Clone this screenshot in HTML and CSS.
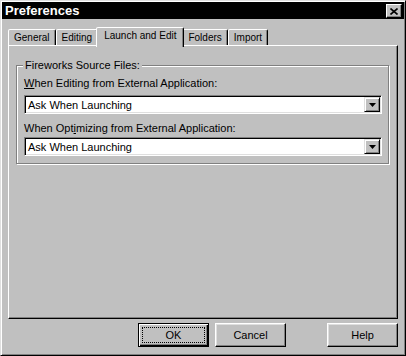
FILE: index.html
```html
<!DOCTYPE html>
<html lang="en">
<head>
    <meta charset="UTF-8">
    <title>Preferences</title>
    <link rel="stylesheet" href="styles.css">
</head>
<body>
    <div class="window">
        <div class="titlebar">
            <span class="title">Preferences</span>
            <button class="close-btn" aria-label="Close">
                <svg width="8" height="7" viewBox="0 0 8 7"><path d="M0.5 0.5L7.5 6.5M7.5 0.5L0.5 6.5" stroke="#000" stroke-width="1.6" fill="none"/></svg>
            </button>
        </div>
        <div class="content">
            <div class="tabs">
                <div class="tab">General</div>
                <div class="tab">Editing</div>
                <div class="tab active">Launch and Edit</div>
                <div class="tab">Folders</div>
                <div class="tab">Import</div>
            </div>
            <div class="panel">
                <fieldset class="group">
                    <legend>Fireworks Source Files:</legend>
                    <label class="field-label"><u>W</u>hen Editing from External Application:</label>
                    <div class="combo">
                        <span class="combo-text">Ask When Launching</span>
                        <span class="combo-btn"><svg width="7" height="4" viewBox="0 0 7 4"><path d="M0 0h7L3.5 4z" fill="#000"/></svg></span>
                    </div>
                    <label class="field-label second">When Opt<u>i</u>mizing from External Application:</label>
                    <div class="combo">
                        <span class="combo-text">Ask When Launching</span>
                        <span class="combo-btn"><svg width="7" height="4" viewBox="0 0 7 4"><path d="M0 0h7L3.5 4z" fill="#000"/></svg></span>
                    </div>
                </fieldset>
            </div>
            <div class="footer">
                <button class="btn default"><span class="focus">OK</span></button>
                <button class="btn">Cancel</button>
                <button class="btn help">Help</button>
            </div>
        </div>
    </div>
</body>
</html>
```

FILE: styles.css
```css
* {
    box-sizing: border-box;
}
body {
    margin: 0;
    font-family: "Liberation Sans", Arial, sans-serif;
    font-size: 11px;
    color: #000;
    background: #c0c0c0;
}
.window {
    width: 406px;
    height: 356px;
    padding: 1px;
    background: #c0c0c0;
    border: 1px solid;
    border-color: #dfdfdf #000 #000 #dfdfdf;
    box-shadow: inset 1px 1px #fff, inset -1px -1px #808080;
    display: flex;
    flex-direction: column;
}
.titlebar {
    height: 17px;
    background: #000;
    color: #fff;
    display: flex;
    align-items: center;
    justify-content: space-between;
    padding: 0 2px 0 3px;
}
.title {
    font-weight: bold;
    font-size: 13px;
}
.close-btn {
    width: 16px;
    height: 14px;
    padding: 0;
    margin-top: 1px;
    background: #c0c0c0;
    border: 1px solid;
    border-color: #fff #000 #000 #fff;
    box-shadow: inset -1px -1px #808080;
    display: flex;
    align-items: center;
    justify-content: center;
}
.content {
    flex: 1;
    display: flex;
    flex-direction: column;
    padding: 0 6px;
}
.tabs {
    height: 26px;
    display: flex;
    align-items: flex-end;
    position: relative;
    z-index: 1;
}
.tab {
    height: 16px;
    padding: 0 5px;
    font-size: 10px;
    line-height: 15px;
    background: #c0c0c0;
    border: 1px solid;
    border-bottom: none;
    border-color: #fff #000 transparent #fff;
    border-radius: 2px 2px 0 0;
    box-shadow: inset -1px 0 #808080;
}
.tab.active {
    height: 20px;
    margin: 0 -2px -2px;
    padding: 0 7px;
    line-height: 16px;
    position: relative;
    z-index: 2;
}
.panel {
    flex: 1;
    padding-top: 13px;
    border: 1px solid;
    border-color: #fff #000 #000 #fff;
    box-shadow: inset -1px -1px #808080;
}
.group {
    margin: 0 8px 0 7px;
    padding: 0 6px 7px 7px;
    border: 1px solid #808080;
    box-shadow: inset 1px 1px #fff, 1px 1px #fff;
}
.group legend {
    padding: 0 2px;
    margin-left: -1px;
    line-height: 13px;
    background: #c0c0c0;
}
.field-label {
    display: block;
    margin-top: 5px;
    line-height: 13px;
}
.field-label.second {
    margin-top: 8px;
}
.combo {
    height: 19px;
    margin-top: 5px;
    padding: 1px;
    background: #fff;
    border: 1px solid;
    border-color: #808080 #fff #fff #808080;
    box-shadow: inset 1px 1px #000, inset -1px -1px #dfdfdf;
    display: flex;
    align-items: center;
}
.field-label.second + .combo {
    margin-top: 2px;
}
.combo-text {
    flex: 1;
    padding-left: 2px;
}
.combo-btn {
    width: 16px;
    height: 15px;
    background: #c0c0c0;
    border: 1px solid;
    border-color: #dfdfdf #000 #000 #dfdfdf;
    box-shadow: inset 1px 1px #fff, inset -1px -1px #808080;
    display: flex;
    align-items: center;
    justify-content: center;
}
.footer {
    height: 35px;
    padding-top: 4px;
    display: flex;
    justify-content: flex-end;
    align-items: flex-start;
}
.btn {
    width: 71px;
    height: 24px;
    margin-left: 6px;
    padding: 0;
    font-family: inherit;
    font-size: 11px;
    color: #000;
    background: #c0c0c0;
    border: 1px solid;
    border-color: #fff #000 #000 #fff;
    box-shadow: inset -1px -1px #808080, inset 1px 1px #dfdfdf;
}
.btn.default {
    padding: 3px;
    border-color: #000;
    box-shadow: inset 1px 1px #fff, inset -1px -1px #000, inset -2px -2px #808080;
}
.btn.help {
    margin-left: 41px;
}
.focus {
    display: flex;
    align-items: center;
    justify-content: center;
    height: 100%;
    border: 1px dotted #000;
}
```
